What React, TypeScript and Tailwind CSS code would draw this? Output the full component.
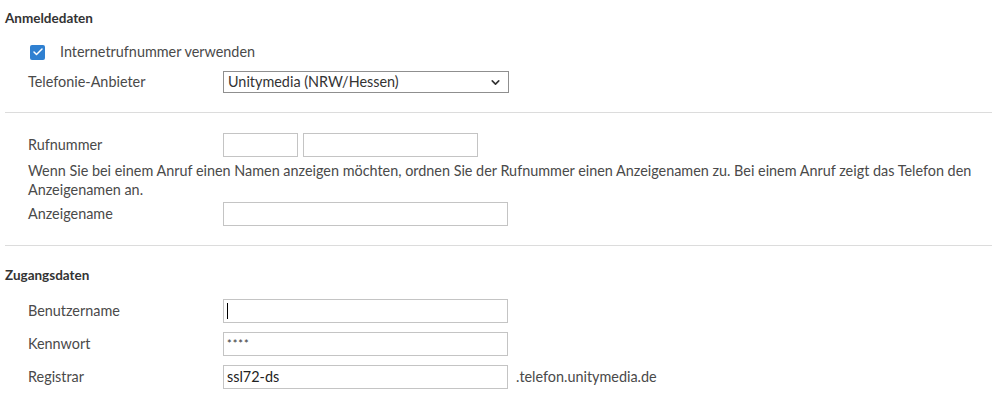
import { Check, ChevronDown } from "lucide-react";

const labelCls = "w-[195px] shrink-0";
const inputCls = "h-[24px] border border-[#c4c4c4] bg-white";

function Row({ label, children, className = "" }: { label: string; children?: React.ReactNode; className?: string }) {
  return (
    <div className={"flex items-center pl-[23px] " + className}>
      <div className={labelCls}>{label}</div>
      {children}
    </div>
  );
}

export default function App() {
  return (
    <div
      className="w-[999px] h-[404px] bg-white pl-[5px] pr-[7px] pt-[8px] text-[14.4px] text-[#4a4a4a] overflow-hidden"
      style={{ fontFamily: "Lato, 'Noto Sans', sans-serif" }}
    >
      {/* Anmeldedaten */}
      <h3 className="text-[13.5px] font-bold leading-[20px] text-[#333]">Anmeldedaten</h3>

      <div className="mt-[12px] flex h-[24px] items-center pl-[25px]">
        <span className="flex h-[15px] w-[15px] items-center justify-center rounded-[2px] bg-[#2f80d1]">
          <Check className="h-[12px] w-[12px] text-white" strokeWidth={3} />
        </span>
        <span className="ml-[15px]">Internetrufnummer verwenden</span>
      </div>

      <Row label="Telefonie-Anbieter" className="mt-[7px] h-[22px]">
        <div className="flex h-[22px] w-[286px] items-center justify-between border border-[#8f8f8f] pl-[4px] pr-[6px] text-[#333]">
          <span>Unitymedia (NRW/Hessen)</span>
          <ChevronDown className="h-[13px] w-[13px] text-[#333]" strokeWidth={3} />
        </div>
      </Row>

      <div className="mt-[19px] h-px bg-[#dcdcdc]" />

      {/* Rufnummer */}
      <Row label="Rufnummer" className="mt-[20px] h-[24px]">
        <div className={inputCls + " w-[75px]"} />
        <div className={inputCls + " ml-[5px] w-[175px]"} />
      </Row>

      <p className="mt-[4px] pl-[23px] leading-[19px]">
        Wenn Sie bei einem Anruf einen Namen anzeigen möchten, ordnen Sie der Rufnummer einen Anzeigenamen zu. Bei einem
        Anruf zeigt das Telefon den Anzeigenamen an.
      </p>

      <Row label="Anzeigename" className="mt-[3px] h-[24px]">
        <div className={inputCls + " w-[285px]"} />
      </Row>

      <div className="mt-[19px] h-px bg-[#dcdcdc]" />

      {/* Zugangsdaten */}
      <h3 className="mt-[19px] text-[13.5px] font-bold leading-[20px] text-[#333]">Zugangsdaten</h3>

      <div className="mt-[14px] flex flex-col gap-[9px]">
        <Row label="Benutzername" className="h-[24px]">
          <div className={inputCls + " flex w-[285px] items-center pl-[3px]"}>
            <span className="h-[16px] w-px bg-black" />
          </div>
        </Row>
        <Row label="Kennwort" className="h-[24px]">
          <div className={inputCls + " flex w-[285px] items-center pl-[3px] text-[11px] tracking-[1px] text-[#333]"}>
            ****
          </div>
        </Row>
        <Row label="Registrar" className="h-[24px]">
          <div className={inputCls + " flex w-[285px] items-center pl-[3px] text-[#222]"}>ssl72-ds</div>
          <span className="ml-[8px]">.telefon.unitymedia.de</span>
        </Row>
      </div>
    </div>
  );
}
